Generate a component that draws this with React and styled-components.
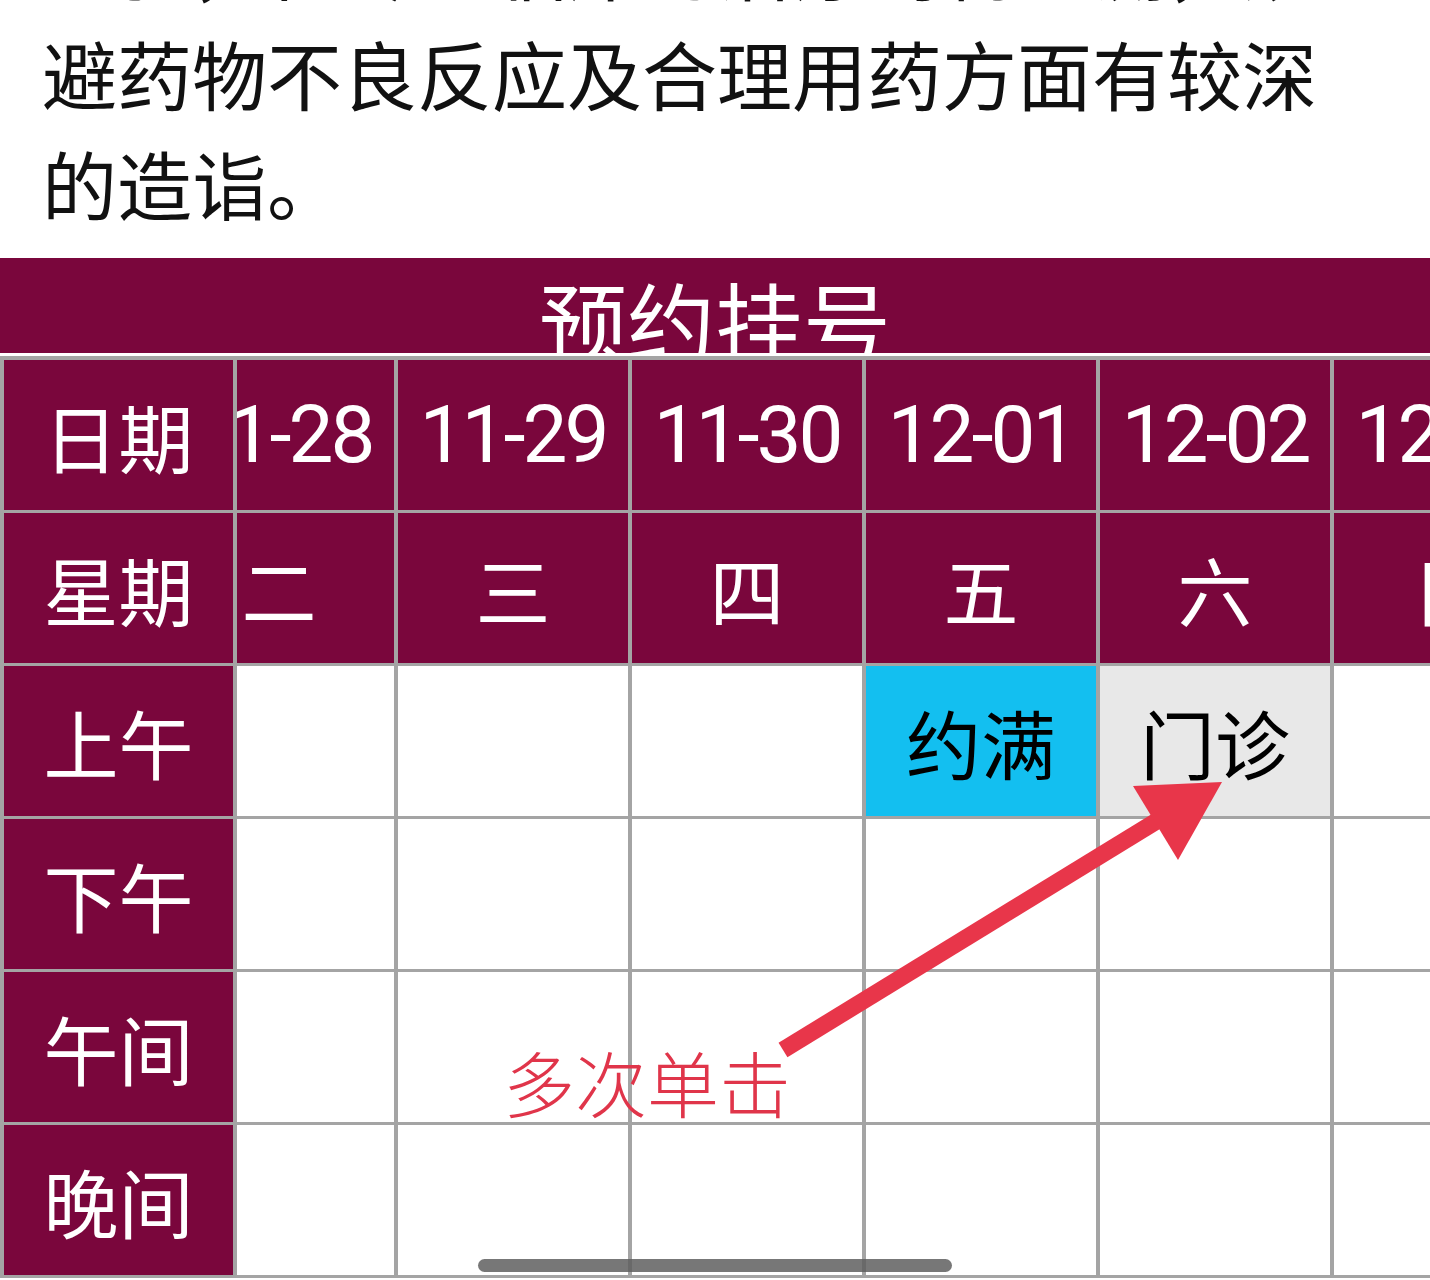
import React from 'react';
import styled, { createGlobalStyle } from 'styled-components';

const GlobalStyle = createGlobalStyle`
  html, body {
    margin: 0;
    padding: 0;
    background: #ffffff;
  }
  body {
    font-family: "Noto Sans CJK SC", "Noto Sans", sans-serif;
  }
`;

const PURPLE = '#7a063c';
const GRID = '#a4a4a4';

const dates = ['11-28', '11-29', '11-30', '12-01', '12-02', '12-03'];
const weekdays = ['二', '三', '四', '五', '六', '日'];
const slots = ['上午', '下午', '午间', '晚间'];

// what is bookable, by slot and date column
const schedule = {
  上午: { 3: { tone: 'full', text: '约满' }, 4: { tone: 'clinic', text: '门诊' } },
};

const Page = styled.div`
  position: relative;
  width: 1430px;
  height: 1280px;
  overflow: hidden;
  background: #fff;
`;

const Intro = styled.p`
  margin: -92px 0 0;
  padding: 0 42px;
  width: 1290px;
  font-size: 75px;
  line-height: 110px;
  color: #111;
`;

const Schedule = styled.section`
  margin-top: 20px;
`;

const TitleBar = styled.div`
  height: 95px;
  background: ${PURPLE};
  overflow: hidden;
  text-align: center;
  padding-top: 17px;
  box-sizing: border-box;
  margin-bottom: 3px;
`;

const Title = styled.h2`
  margin: 0;
  font-size: 88px;
  line-height: 1;
  font-weight: 400;
  color: #fff;
`;

const Grid = styled.div`
  display: flex;
  border-top: 4px solid ${GRID};
  border-left: 4px solid ${GRID};
`;

const FixedColumn = styled.div`
  flex: none;
  width: 233px;
  display: flex;
  flex-direction: column;
  border-right: 4px solid ${GRID};
  box-sizing: border-box;
  background: ${PURPLE};
  position: relative;
  z-index: 1;
`;

const RowLabel = styled.div`
  height: 153px;
  box-sizing: border-box;
  border-bottom: 3px solid ${GRID};
  display: flex;
  align-items: center;
  justify-content: center;
  color: #fff;
  font-size: 75px;
`;

const Viewport = styled.div`
  flex: 1;
  overflow: hidden;
`;

const Track = styled.div`
  display: grid;
  grid-template-columns: repeat(6, 234px);
  grid-auto-rows: 153px;
  margin-left: -73px;
  width: max-content;
`;

const tones = {
  head: { bg: PURPLE, fg: '#fff' },
  full: { bg: '#13bff0', fg: '#000' },
  clinic: { bg: '#e8e8e8', fg: '#000' },
  empty: { bg: '#fff', fg: '#000' },
};

const Cell = styled.div`
  box-sizing: border-box;
  border-right: 4px solid ${GRID};
  border-bottom: 3px solid ${GRID};
  background: ${(p) => tones[p.$tone].bg};
  color: ${(p) => tones[p.$tone].fg};
  display: flex;
  align-items: center;
  justify-content: center;
  font-size: 75px;
  white-space: nowrap;
`;

const DateText = styled.span`
  font-family: Roboto, "Noto Sans", sans-serif;
  font-size: 80px;
  letter-spacing: -3px;
`;

const Overlay = styled.svg`
  position: absolute;
  left: 0;
  top: 0;
  width: 1430px;
  height: 1280px;
  pointer-events: none;
`;

const Note = styled.span`
  position: absolute;
  left: 503px;
  top: 1045px;
  font-size: 72px;
  line-height: 1;
  font-weight: 300;
  color: #e0354a;
`;

const HomeBar = styled.div`
  position: absolute;
  left: 478px;
  top: 1259px;
  width: 474px;
  height: 13px;
  border-radius: 7px;
  background: rgba(95, 95, 95, 0.85);
`;

export default function App() {
  return (
    <Page>
      <GlobalStyle />
      <Intro>经验，在专业临床的治疗药物监测，规避药物不良反应及合理用药方面有较深的造诣。</Intro>
      <Schedule>
        <TitleBar>
          <Title>预约挂号</Title>
        </TitleBar>
        <Grid>
          <FixedColumn>
            {['日期', '星期', ...slots].map((label) => (
              <RowLabel key={label}>{label}</RowLabel>
            ))}
          </FixedColumn>
          <Viewport>
            <Track>
              {dates.map((d) => (
                <Cell key={d} $tone="head">
                  <DateText>{d}</DateText>
                </Cell>
              ))}
              {weekdays.map((w) => (
                <Cell key={w} $tone="head">
                  {w}
                </Cell>
              ))}
              {slots.map((slot) =>
                dates.map((d, i) => {
                  const entry = schedule[slot] && schedule[slot][i];
                  return (
                    <Cell key={slot + d} $tone={entry ? entry.tone : 'empty'}>
                      {entry ? entry.text : ''}
                    </Cell>
                  );
                })
              )}
            </Track>
          </Viewport>
        </Grid>
      </Schedule>

      <Overlay viewBox="0 0 1430 1280">
        <line x1="783" y1="1050" x2="1160" y2="819" stroke="#e8364a" strokeWidth="17" />
        <polygon points="1133,786 1222,782 1178,860" fill="#e8364a" />
      </Overlay>
      <Note>多次单击</Note>
      <HomeBar />
    </Page>
  );
}
